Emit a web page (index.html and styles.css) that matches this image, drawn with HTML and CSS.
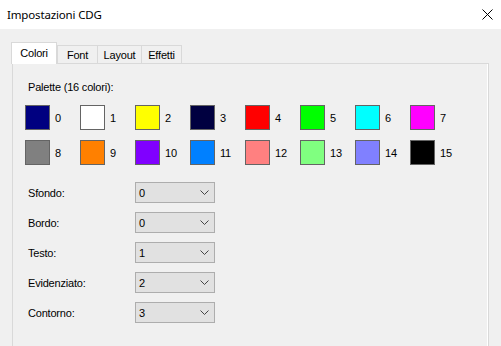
FILE: index.html
```html
<!DOCTYPE html>
<html>
<head>
<meta charset="utf-8">
<link rel="stylesheet" href="styles.css">
</head>
<body>
<div class="window">
  <div class="titlebar">
    <span class="title">Impostazioni CDG</span>
    <svg class="close" width="11" height="11" viewBox="0 0 11 11"><path d="M0.5 0.5 L10.5 10.5 M10.5 0.5 L0.5 10.5" stroke="#000" stroke-width="1" fill="none"/></svg>
  </div>
  <div class="content">
    <div class="tabs">
      <div class="tab active w-colori">Colori</div>
      <div class="tab w-font">Font</div>
      <div class="tab w-layout">Layout</div>
      <div class="tab w-effetti">Effetti</div>
    </div>
    <div class="panel">
      <div class="caption">Palette (16 colori):</div>
      <div class="palette">
        <div class="cell"><span class="sw" style="background:#000080"></span><span class="num">0</span></div>
        <div class="cell"><span class="sw" style="background:#ffffff"></span><span class="num">1</span></div>
        <div class="cell"><span class="sw" style="background:#ffff00"></span><span class="num">2</span></div>
        <div class="cell"><span class="sw" style="background:#000040"></span><span class="num">3</span></div>
        <div class="cell"><span class="sw" style="background:#ff0000"></span><span class="num">4</span></div>
        <div class="cell"><span class="sw" style="background:#00ff00"></span><span class="num">5</span></div>
        <div class="cell"><span class="sw" style="background:#00ffff"></span><span class="num">6</span></div>
        <div class="cell"><span class="sw" style="background:#ff00ff"></span><span class="num">7</span></div>
        <div class="cell"><span class="sw" style="background:#808080"></span><span class="num">8</span></div>
        <div class="cell"><span class="sw" style="background:#ff8000"></span><span class="num">9</span></div>
        <div class="cell"><span class="sw" style="background:#8000ff"></span><span class="num">10</span></div>
        <div class="cell"><span class="sw" style="background:#0080ff"></span><span class="num">11</span></div>
        <div class="cell"><span class="sw" style="background:#ff8080"></span><span class="num">12</span></div>
        <div class="cell"><span class="sw" style="background:#80ff80"></span><span class="num">13</span></div>
        <div class="cell"><span class="sw" style="background:#8080ff"></span><span class="num">14</span></div>
        <div class="cell"><span class="sw" style="background:#000000"></span><span class="num">15</span></div>
      </div>
      <div class="form">
        <div class="row"><span class="label">Sfondo:</span><div class="select"><span>0</span><svg width="9" height="5" viewBox="0 0 9 5"><path d="M0.5 0.5 L4.5 4.5 L8.5 0.5" stroke="#444" fill="none"/></svg></div></div>
        <div class="row"><span class="label">Bordo:</span><div class="select"><span>0</span><svg width="9" height="5" viewBox="0 0 9 5"><path d="M0.5 0.5 L4.5 4.5 L8.5 0.5" stroke="#444" fill="none"/></svg></div></div>
        <div class="row"><span class="label">Testo:</span><div class="select"><span>1</span><svg width="9" height="5" viewBox="0 0 9 5"><path d="M0.5 0.5 L4.5 4.5 L8.5 0.5" stroke="#444" fill="none"/></svg></div></div>
        <div class="row"><span class="label">Evidenziato:</span><div class="select"><span>2</span><svg width="9" height="5" viewBox="0 0 9 5"><path d="M0.5 0.5 L4.5 4.5 L8.5 0.5" stroke="#444" fill="none"/></svg></div></div>
        <div class="row"><span class="label">Contorno:</span><div class="select"><span>3</span><svg width="9" height="5" viewBox="0 0 9 5"><path d="M0.5 0.5 L4.5 4.5 L8.5 0.5" stroke="#444" fill="none"/></svg></div></div>
      </div>
    </div>
  </div>
</div>
</body>
</html>
```
FILE: styles.css
```css
* { box-sizing: border-box; }
html, body {
  margin: 0;
  padding: 0;
  width: 501px;
  height: 346px;
  overflow: hidden;
  background: #f0f0f0;
}
.window {
  width: 501px;
  height: 346px;
  font-family: "Liberation Sans", Arial, sans-serif;
  font-size: 11px;
  color: #000;
  letter-spacing: -0.2px;
}
.titlebar {
  height: 29px;
  background: #fff;
  display: flex;
  align-items: center;
  justify-content: space-between;
  padding: 0 8px 0 7px;
}
.title {
  font-family: "Noto Sans", "Open Sans", sans-serif;
  font-size: 11.5px;
  letter-spacing: -0.15px;
  margin-top: -1px;
}
.close { margin-top: -1px; margin-right: 0; }
.content {
  padding: 13px 0 0 11px;
}
.tabs {
  display: flex;
  align-items: flex-end;
  height: 21px;
  position: relative;
  z-index: 2;
}
.tab {
  height: 18px;
  border: 1px solid #d9d9d9;
  border-bottom: none;
  margin-left: -1px;
  background: #f0f0f0;
  display: flex;
  align-items: center;
  justify-content: center;
  padding-top: 1px;
}
.tab.active {
  height: 22px;
  margin-left: 0;
  margin-bottom: -1px;
  background: #fff;
  padding-top: 0;
  padding-bottom: 1px;
}
.w-colori { width: 46px; }
.w-font { width: 41px; margin-left: 0; }
.w-layout { width: 45px; }
.w-effetti { width: 41px; }
.panel {
  margin-left: 1px;
  width: 477px;
  height: 300px;
  border: 1px solid #d9d9d9;
  box-shadow: inset -1px 0 0 #fff;
  padding: 17px 0 0 12px;
  position: relative;
  z-index: 1;
}
.caption {
  line-height: 13px;
  padding-left: 3px;
}
.palette {
  margin-top: 11px;
  display: grid;
  grid-template-columns: repeat(8, 55px);
  row-gap: 10px;
}
.cell {
  display: flex;
  align-items: center;
  height: 25px;
}
.sw {
  width: 25px;
  height: 25px;
  border: 1px solid #646464;
  margin-right: 5px;
}
.num { padding-top: 1px; }
.form {
  margin-top: 17px;
  display: flex;
  flex-direction: column;
  gap: 9px;
  padding-left: 3px;
}
.row {
  display: flex;
  align-items: center;
  height: 21px;
}
.label {
  width: 107px;
}
.select {
  width: 80px;
  height: 21px;
  background: #e1e1e1;
  border: 1px solid #adadad;
  display: flex;
  align-items: center;
  justify-content: space-between;
  padding: 0 5px 0 3px;
}
.select span { padding-top: 1px; }
```
